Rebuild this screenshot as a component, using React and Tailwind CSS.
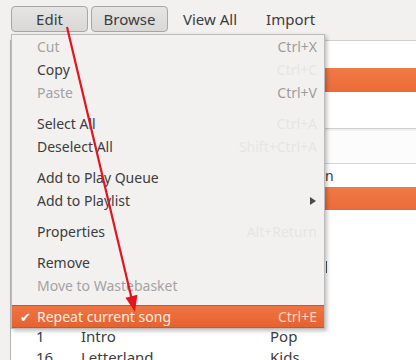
import React from "react";

const font = { fontFamily: '"Noto Sans", "DejaVu Sans", sans-serif' };

function Item({ label, shortcut, disabled, faint, arrow }) {
  return (
    <div className="h-[23px] flex items-center pl-[25px] pr-[7px]">
      <span className={disabled ? "text-[#a3a3a3]" : "text-[#3c3c3c]"}>{label}</span>
      <span className="flex-1" />
      {shortcut && (
        <span className={faint ? "text-[#e6e5e4]" : "text-[#9c9c9c]"}>{shortcut}</span>
      )}
      {arrow && (
        <svg width="6" height="8" viewBox="0 0 6 8" className="mr-[1px]">
          <polygon points="0,0 6,4 0,8" fill="#4a4a4a" />
        </svg>
      )}
    </div>
  );
}

function Sep() {
  return <div className="h-[8px]" />;
}

export default function App() {
  return (
    <div className="relative w-[416px] h-[360px] overflow-hidden bg-white text-[14px] text-[#3c3c3c]" style={font}>
      {/* toolbar */}
      <div className="h-[40px] bg-[#f2f1f0] flex items-start pt-[6px] pl-[11px]">
        <div className="w-[77px] h-[26px] rounded-[4px] border border-[#a7a6a4] bg-gradient-to-b from-[#e6e5e3] to-[#d9d8d6] flex items-center justify-center text-[15px]">Edit</div>
        <div className="ml-[3px] w-[77px] h-[26px] rounded-[4px] border border-[#a7a6a4] bg-gradient-to-b from-[#e6e5e3] to-[#d9d8d6] flex items-center justify-center text-[15px]">Browse</div>
        <div className="ml-[15px] h-[26px] flex items-center text-[15px]">View All</div>
        <div className="ml-[29px] h-[26px] flex items-center text-[15px]">Import</div>
      </div>
      {/* content */}
      <div className="flex">
        <div className="w-[11px] shrink-0 bg-[#f2f1f0] border-r border-[#b5b5b5]" />
        <div className="flex-1 flex flex-col border-t border-[#cfcfcf]">
          <div className="h-[27px] shrink-0" />
          <div className="h-[24px] shrink-0 bg-gradient-to-b from-[#f07a47] to-[#ea6b38]" />
          <div className="h-[36px] shrink-0" />
          <div className="h-[1px] shrink-0 bg-[#cfcfcf]" />
          <div className="h-[2px] shrink-0 bg-[#f0f0f0]" />
          <div className="h-[32px] shrink-0 bg-[#fcfcfc]" />
          <div className="h-[1px] shrink-0 bg-[#d5d5d5]" />
          <div className="h-[23px] shrink-0 flex items-center pl-[314px]">n</div>
          <div className="h-[23px] shrink-0 bg-gradient-to-b from-[#f07a47] to-[#ea6b38]" />
          <div className="h-[51px] shrink-0" />
          <div className="h-[12px] shrink-0 flex pl-[315px]"><div className="w-[1px] bg-[#4a5060]" /></div>
          <div className="h-[53px] shrink-0" />
          <div className="h-[21px] shrink-0 flex items-center text-[15px]">
            <span className="w-[70px] pl-[25px]">1</span>
            <span className="w-[189px]">Intro</span>
            <span>Pop</span>
          </div>
          <div className="h-[21px] shrink-0 flex items-center text-[15px]">
            <span className="w-[70px] pl-[25px]">16</span>
            <span className="w-[189px]">Letterland</span>
            <span>Kids</span>
          </div>
        </div>
      </div>

      {/* menu */}
      <div className="absolute left-[11px] top-[34px] w-[314px] bg-[#f2f1f0] border border-[#bcbbb9] shadow-[2px_2px_4px_rgba(0,0,0,0.25)] text-[14px]">
        <Item label="Cut" shortcut="Ctrl+X" disabled />
        <Item label="Copy" shortcut="Ctrl+C" faint />
        <Item label="Paste" shortcut="Ctrl+V" disabled />
        <Sep />
        <Item label="Select All" shortcut="Ctrl+A" faint />
        <Item label="Deselect All" shortcut="Shift+Ctrl+A" faint />
        <Sep />
        <Item label="Add to Play Queue" />
        <Item label="Add to Playlist" arrow />
        <Sep />
        <Item label="Properties" shortcut="Alt+Return" faint />
        <Sep />
        <Item label="Remove" />
        <Item label="Move to Wastebasket" disabled />
        <Sep />
        <div className="h-[23px] flex items-center pl-[25px] pr-[7px] bg-gradient-to-b from-[#ef7443] to-[#e6622f] border-y border-[#c9552a] relative text-[#fdf0e8]">
          <span className="absolute left-[8px] top-[2px] text-[13px] text-white">✔</span>
          <span>Repeat current song</span>
          <span className="flex-1" />
          <span className="text-[#fbd8c4]">Ctrl+E</span>
        </div>
      </div>

      {/* red arrow */}
      <svg className="absolute left-0 top-0 pointer-events-none" width="416" height="360" viewBox="0 0 416 360">
        <line x1="67" y1="27" x2="131.5" y2="298" stroke="#e3141b" strokeWidth="2.2" />
        <polygon points="135,312 137.4,294.8 125.5,297.8" fill="#e3141b" />
      </svg>
    </div>
  );
}
